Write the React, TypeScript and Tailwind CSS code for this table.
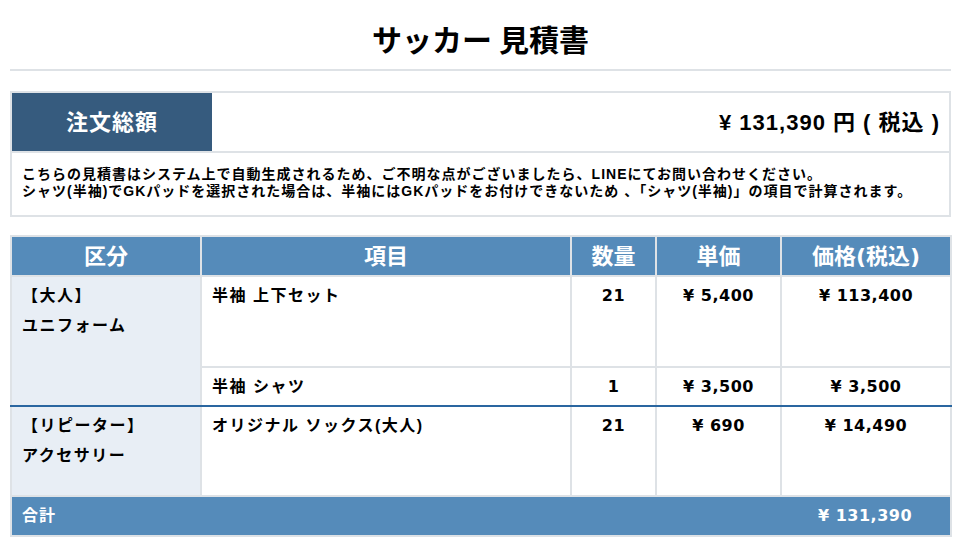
import React from 'react'

const font = { fontFamily: '"Liberation Sans", "Noto Sans CJK JP", sans-serif' }
const numFont = { fontFamily: '"DejaVu Sans", "Noto Sans CJK JP", sans-serif' }

type Item = { name: string; qty: number; unit: string; price: string; h: string }

const groups: { label: string[]; items: Item[] }[] = [
  {
    label: ['【大人】', 'ユニフォーム'],
    items: [
      { name: '半袖 上下セット', qty: 21, unit: '¥ 5,400', price: '¥ 113,400', h: 'h-[91px]' },
      { name: '半袖 シャツ', qty: 1, unit: '¥ 3,500', price: '¥ 3,500', h: 'h-[39px]' },
    ],
  },
  {
    label: ['【リピーター】', 'アクセサリー'],
    items: [
      { name: 'オリジナル ソックス(大人)', qty: 21, unit: '¥ 690', price: '¥ 14,490', h: 'h-[90px]' },
    ],
  },
]

export default function App() {
  return (
    <div className="min-h-screen bg-white text-black px-[10px]" style={font}>
      {/* Title */}
      <h1 className="pt-[20px] pb-[13px] text-center text-[30px] leading-[36px] font-bold" style={{ fontFamily: '"Noto Sans CJK JP", sans-serif' }}>
        サッカー 見積書
      </h1>
      <div className="h-[2px] bg-[#dee2e6]" />

      {/* Summary */}
      <div className="mt-[20px] border-2 border-[#dee2e6]">
        <div className="flex border-b-2 border-[#dee2e6]">
          <div className="w-[200px] h-[58px] bg-[#365b7e] text-white text-[22px] tracking-[1px] font-bold flex items-center justify-center">
            注文総額
          </div>
          <div className="flex-1 flex items-center justify-end pr-[9px] text-[22px] tracking-[1px] font-bold">
            ¥ 131,390 円 ( 税込 )
          </div>
        </div>
        <div className="px-[10px] pt-[13px] pb-[15px] text-[14px] tracking-[1px] leading-[17px] font-bold">
          <p>こちらの見積書はシステム上で自動生成されるため、ご不明な点がございましたら、LINEにてお問い合わせください。</p>
          <p>シャツ(半袖)でGKパッドを選択された場合は、半袖にはGKパッドをお付けできないため 、「シャツ(半袖)」の項目で計算されます。</p>
        </div>
      </div>

      {/* Table */}
      <table className="mt-[18px] w-full table-fixed border-collapse border-2 border-[#dee2e6]">
        <colgroup>
          <col className="w-[190px]" />
          <col className="w-[370px]" />
          <col className="w-[85px]" />
          <col className="w-[125px]" />
          <col className="w-[170px]" />
        </colgroup>
        <thead>
          <tr className="h-[40px] bg-[#558bba] text-white text-[22px] font-bold">
            {['区分', '項目', '数量', '単価', '価格(税込)'].map(h => (
              <th key={h} className="border-2 border-[#dee2e6] font-bold" style={h.includes('(') ? numFont : undefined}>{h}</th>
            ))}
          </tr>
        </thead>
        <tbody className="text-[16px] font-bold leading-[30px]">
          {groups.map((g, gi) =>
            g.items.map((it, i) => {
              const last = i === g.items.length - 1 && gi < groups.length - 1
              const b = last ? 'border-b-[#2a66a0]' : ''
              return (
                <tr key={it.name} className={it.h}>
                  {i === 0 && (
                    <td
                      rowSpan={g.items.length}
                      className={`align-top bg-[#e8eef5] border-2 border-[#dee2e6] px-[10px] pt-[4px] tracking-[1.5px] ${gi < groups.length - 1 ? 'border-b-[#2a66a0]' : ''}`}
                    >
                      {g.label.map(l => <div key={l}>{l}</div>)}
                    </td>
                  )}
                  <td className={`align-top border-2 border-[#dee2e6] px-[10px] pt-[4px] tracking-[1.5px] ${b}`}>{it.name}</td>
                  <td className={`align-top text-center border-2 border-[#dee2e6] pt-[4px] tracking-[0.5px] ${b}`} style={numFont}>{it.qty}</td>
                  <td className={`align-top text-center border-2 border-[#dee2e6] pt-[4px] tracking-[0.5px] ${b}`} style={numFont}>{it.unit}</td>
                  <td className={`align-top text-center border-2 border-[#dee2e6] pt-[4px] tracking-[0.5px] ${b}`} style={numFont}>{it.price}</td>
                </tr>
              )
            })
          )}
          <tr className="h-[40px] bg-[#558bba] text-white">
            <td colSpan={5} className="border-2 border-[#dee2e6] p-0">
              <div className="flex items-center">
                <span className="flex-1 pl-[10px] tracking-[1px]">合計</span>
                <span className="w-[170px] text-center tracking-[0.5px]" style={numFont}>¥ 131,390</span>
              </div>
            </td>
          </tr>
        </tbody>
      </table>
    </div>
  )
}
